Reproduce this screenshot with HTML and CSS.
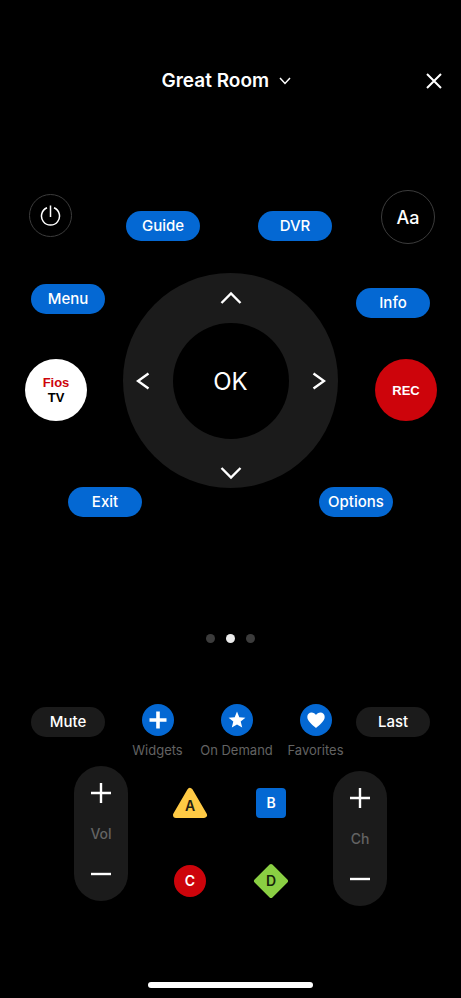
FILE: index.html
```html
<!DOCTYPE html>
<html lang="en">
<head>
<meta charset="utf-8">
<meta name="viewport" content="width=device-width, initial-scale=1">
<title>Remote</title>
<link rel="stylesheet" href="styles.css">
</head>
<body>
<header class="header">
  <label class="room">
    <select class="room-select" aria-label="Room"><option>Great Room</option></select>
    <svg class="room-chevron" width="12" height="8" viewBox="0 0 12 8"><path d="M1 1l5 5.500L11 1"/></svg>
  </label>
  <button class="close" aria-label="Close"><svg width="16" height="16" viewBox="0 0 16 16"><path d="M1 1l14 14M15 1L1 15"/></svg></button>
</header>

<main class="remote">
  <section class="pad">
    <div class="side side-left">
      <button class="ring power" aria-label="Power"><svg width="21" height="22" viewBox="0 0 21 22"><path d="M7 2.800a9 9 0 1 0 7 0M10.500 0.500v11.500"/></svg></button>
      <button class="pill menu">Menu</button>
      <button class="disc fios"><span class="fios-name">Fios</span><span>TV</span></button>
    </div>
    <div class="middle">
      <div class="top-keys">
        <button class="pill">Guide</button>
        <button class="pill">DVR</button>
      </div>
      <div class="dpad">
        <button class="arrow up" aria-label="Up"><svg width="22" height="14" viewBox="0 0 22 14"><path d="M1.500 12L11 2.500l9.500 9.500"/></svg></button>
        <button class="arrow left" aria-label="Left"><svg width="14" height="18" viewBox="0 0 14 18"><path d="M12.500 1.500L2 9l10.500 7.500"/></svg></button>
        <button class="ok">OK</button>
        <button class="arrow right" aria-label="Right"><svg width="14" height="18" viewBox="0 0 14 18"><path d="M1.500 1.500L12 9 1.500 16.500"/></svg></button>
        <button class="arrow down" aria-label="Down"><svg width="22" height="14" viewBox="0 0 22 14"><path d="M1.500 2l9.500 9.500L20.500 2"/></svg></button>
      </div>
    </div>
    <div class="side side-right">
      <button class="ring text-size">Aa</button>
      <button class="pill info">Info</button>
      <button class="disc rec">REC</button>
    </div>
  </section>

  <div class="bottom-keys">
    <button class="pill">Exit</button>
    <button class="pill">Options</button>
  </div>

  <nav class="dots" aria-label="Pages">
    <button class="dot" aria-label="Page 1"></button>
    <button class="dot current" aria-label="Page 2"></button>
    <button class="dot" aria-label="Page 3"></button>
  </nav>

  <section class="shortcuts">
    <button class="pill dark">Mute</button>
    <div class="actions">
      <button class="action">
        <span class="badge"><svg width="18" height="18" viewBox="0 0 18 18"><path d="M7.200 0.500h3.600v6.700h6.700v3.600h-6.700v6.700H7.200v-6.700H0.500V7.200h6.700z"/></svg></span>
        <span>Widgets</span>
      </button>
      <button class="action">
        <span class="badge"><svg width="18" height="18" viewBox="0 0 18 18"><path d="M9 0.600l2.300 5.600 6.100.5-4.700 3.900 1.500 6L9 13.400l-5.200 3.200 1.500-6L.6 6.700l6.100-.5z"/></svg></span>
        <span>On Demand</span>
      </button>
      <button class="action">
        <span class="badge"><svg width="18" height="18" viewBox="0 0 18 18"><path d="M9 17C6.500 14.600.3 10.300.3 5.900.3 3.300 2.200 1.500 4.600 1.500 6.500 1.500 8.100 2.500 9 4.100c.9-1.600 2.500-2.600 4.400-2.600 2.400 0 4.300 1.800 4.300 4.400C17.700 10.300 11.500 14.600 9 17z"/></svg></span>
        <span>Favorites</span>
      </button>
    </div>
    <button class="pill dark last">Last</button>
  </section>

  <section class="controls">
    <div class="rocker" role="group" aria-label="Volume">
      <button class="step" aria-label="Volume up"><svg width="20" height="20" viewBox="0 0 20 20"><path d="M10 0v20M0 10h20"/></svg></button>
      <span class="rocker-name">Vol</span>
      <button class="step" aria-label="Volume down"><svg width="20" height="20" viewBox="0 0 20 20"><path d="M0 10h20"/></svg></button>
    </div>
    <div class="color-keys">
      <button class="key key-a"><svg width="36" height="36" viewBox="0 0 36 36"><path d="M18 6l14 24H4z"/></svg><span>A</span></button>
      <button class="key key-b"><svg width="36" height="36" viewBox="0 0 36 36"><rect x="5" y="5" width="26" height="26" rx="2"/></svg><span>B</span></button>
      <button class="key key-c"><svg width="36" height="36" viewBox="0 0 36 36"><circle cx="18" cy="18" r="14"/></svg><span>C</span></button>
      <button class="key key-d"><svg width="36" height="36" viewBox="0 0 36 36"><path d="M18 3l15 15-15 15L3 18z"/></svg><span>D</span></button>
    </div>
    <div class="rocker channel" role="group" aria-label="Channel">
      <button class="step" aria-label="Channel up"><svg width="20" height="20" viewBox="0 0 20 20"><path d="M10 0v20M0 10h20"/></svg></button>
      <span class="rocker-name">Ch</span>
      <button class="step" aria-label="Channel down"><svg width="20" height="20" viewBox="0 0 20 20"><path d="M0 10h20"/></svg></button>
    </div>
  </section>
</main>

<div class="home-bar"></div>
</body>
</html>
```
FILE: styles.css
```css
* {
  box-sizing: border-box;
}

body {
  margin: 0;
  min-height: 100vh;
  display: flex;
  flex-direction: column;
  background: #000;
  color: #fff;
  font-family: Inter, "Liberation Sans", sans-serif;
}

button,
select {
  margin: 0;
  padding: 0;
  border: 0;
  background: none;
  color: inherit;
  font: inherit;
  cursor: pointer;
}

svg {
  display: block;
  fill: none;
  stroke: currentColor;
  stroke-width: 2;
}

/* Header */
.header {
  display: grid;
  grid-template-columns: 1fr auto 1fr;
  align-items: center;
  padding: 69px 15px 0 6px;
}

.room {
  grid-column: 2;
  display: flex;
  align-items: center;
  gap: 9px;
}

.room-select {
  appearance: none;
  font-size: 19px;
  line-height: 24px;
  font-weight: 600;
}

.room-select option {
  color: #000;
}

.room-chevron {
  stroke-width: 1.5;
}

.close {
  justify-self: end;
  width: 24px;
  height: 24px;
  display: grid;
  place-items: center;
}

/* Shared key shapes */
.pill {
  width: 74px;
  height: 30px;
  border-radius: 15px;
  background: #0468d3;
  font-size: 15px;
  line-height: 20px;
  font-weight: 500;
}

.dark {
  background: #1b1b1b;
}

.ring {
  display: grid;
  place-items: center;
  border: 1px solid #3c3c3c;
  border-radius: 50%;
}

.disc {
  width: 62px;
  height: 62px;
  display: flex;
  flex-direction: column;
  align-items: center;
  justify-content: center;
  border-radius: 50%;
  font-family: "Liberation Sans", sans-serif;
  font-size: 13px;
  line-height: 15px;
  font-weight: 700;
}

/* Navigation pad */
.pad {
  display: grid;
  grid-template-columns: 1fr 215px 1fr;
  padding-top: 97px;
}

.side {
  display: flex;
  flex-direction: column;
}

.side-left {
  align-items: flex-start;
  padding: 4px 0 0 25px;
}

.side-right {
  align-items: flex-end;
  padding-right: 24px;
}

.power {
  width: 43px;
  height: 43px;
  margin: 0 0 47px 4px;
}

.power svg {
  stroke-width: 1.5;
}

.menu {
  margin: 0 0 45px 6px;
}

.text-size {
  width: 54px;
  height: 54px;
  margin: 0 2px 44px 0;
  font-size: 18px;
  font-weight: 500;
}

.info {
  margin: 0 7px 41px 0;
}

.fios {
  background: #fff;
  color: #000;
}

.fios-name {
  color: #cd040b;
}

.rec {
  background: #cd040b;
}

.top-keys {
  display: flex;
  justify-content: space-between;
  padding: 21px 6px 32px 3px;
}

.dpad {
  display: grid;
  grid-template-columns: 39px 1fr 39px;
  grid-template-rows: 50px 1fr 50px;
  place-items: center;
  height: 215px;
  border-radius: 50%;
  background: #1b1b1b;
}

.arrow {
  display: grid;
  place-items: center;
  width: 36px;
  height: 32px;
}

.arrow svg {
  stroke-width: 2.4;
}

.up {
  grid-area: 1 / 2;
}

.left {
  grid-area: 2 / 1;
}

.right {
  grid-area: 2 / 3;
}

.down {
  grid-area: 3 / 2;
  align-self: end;
}

.ok {
  grid-area: 2 / 2;
  width: 116px;
  height: 116px;
  border-radius: 50%;
  background: #000;
  font-size: 24px;
}

.bottom-keys {
  display: flex;
  justify-content: space-between;
  margin-top: -1px;
  padding: 0 68px;
}

/* Page dots */
.dots {
  display: flex;
  justify-content: center;
  gap: 11px;
  padding: 117px 0 61px;
}

.dot {
  width: 9px;
  height: 9px;
  border-radius: 50%;
  background: #3c3c3c;
}

.current {
  background: #ececec;
}

/* Shortcut row */
.shortcuts {
  display: flex;
  align-items: flex-start;
  padding: 0 31px;
}

.shortcuts .pill {
  margin-top: 3px;
}

.shortcuts .last {
  margin-left: auto;
}

.actions {
  display: grid;
  grid-template-columns: repeat(3, 79px);
  margin-left: 13px;
}

.action {
  display: flex;
  flex-direction: column;
  align-items: center;
  gap: 6px;
  color: #636363;
  font-size: 13px;
  line-height: 16px;
  white-space: nowrap;
}

.badge {
  display: grid;
  place-items: center;
  width: 32px;
  height: 32px;
  border-radius: 50%;
  background: #0468d3;
  color: #fff;
}

.badge svg {
  fill: currentColor;
  stroke: none;
}

/* Volume, color keys and channel */
.controls {
  display: flex;
  justify-content: space-between;
  align-items: flex-start;
  padding: 8px 74px 0;
}

.rocker {
  display: flex;
  flex-direction: column;
  align-items: center;
  justify-content: space-between;
  width: 54px;
  height: 135px;
  padding: 17px 0;
  border-radius: 27px;
  background: #1b1b1b;
}

.rocker svg {
  stroke-width: 2.4;
}

.channel {
  margin-top: 5px;
}

.rocker-name {
  color: #636363;
  font-size: 14px;
  line-height: 20px;
  font-weight: 500;
}

.color-keys {
  display: grid;
  grid-template-columns: 81px 81px;
  row-gap: 42px;
  justify-items: center;
  padding-top: 19px;
}

.key {
  display: grid;
  place-items: center;
  font-size: 14px;
  line-height: 20px;
  font-weight: 600;
}

.key > * {
  grid-area: 1 / 1;
}

.key svg {
  fill: currentColor;
  stroke-width: 4;
  stroke-linejoin: round;
}

.key span {
  color: #fff;
}

.key-a {
  color: #ffca45;
}

.key-a svg {
  stroke-width: 6;
}

.key-b {
  color: #0468d3;
}

.key-c {
  color: #cd040b;
}

.key-d {
  color: #8acf43;
}

.key-a span {
  padding-top: 5px;
  color: #221e14;
}

.key-d span {
  color: #16240a;
}

.home-bar {
  width: 165px;
  height: 6px;
  margin: auto auto 10px;
  border-radius: 3px;
  background: #fff;
}
```
